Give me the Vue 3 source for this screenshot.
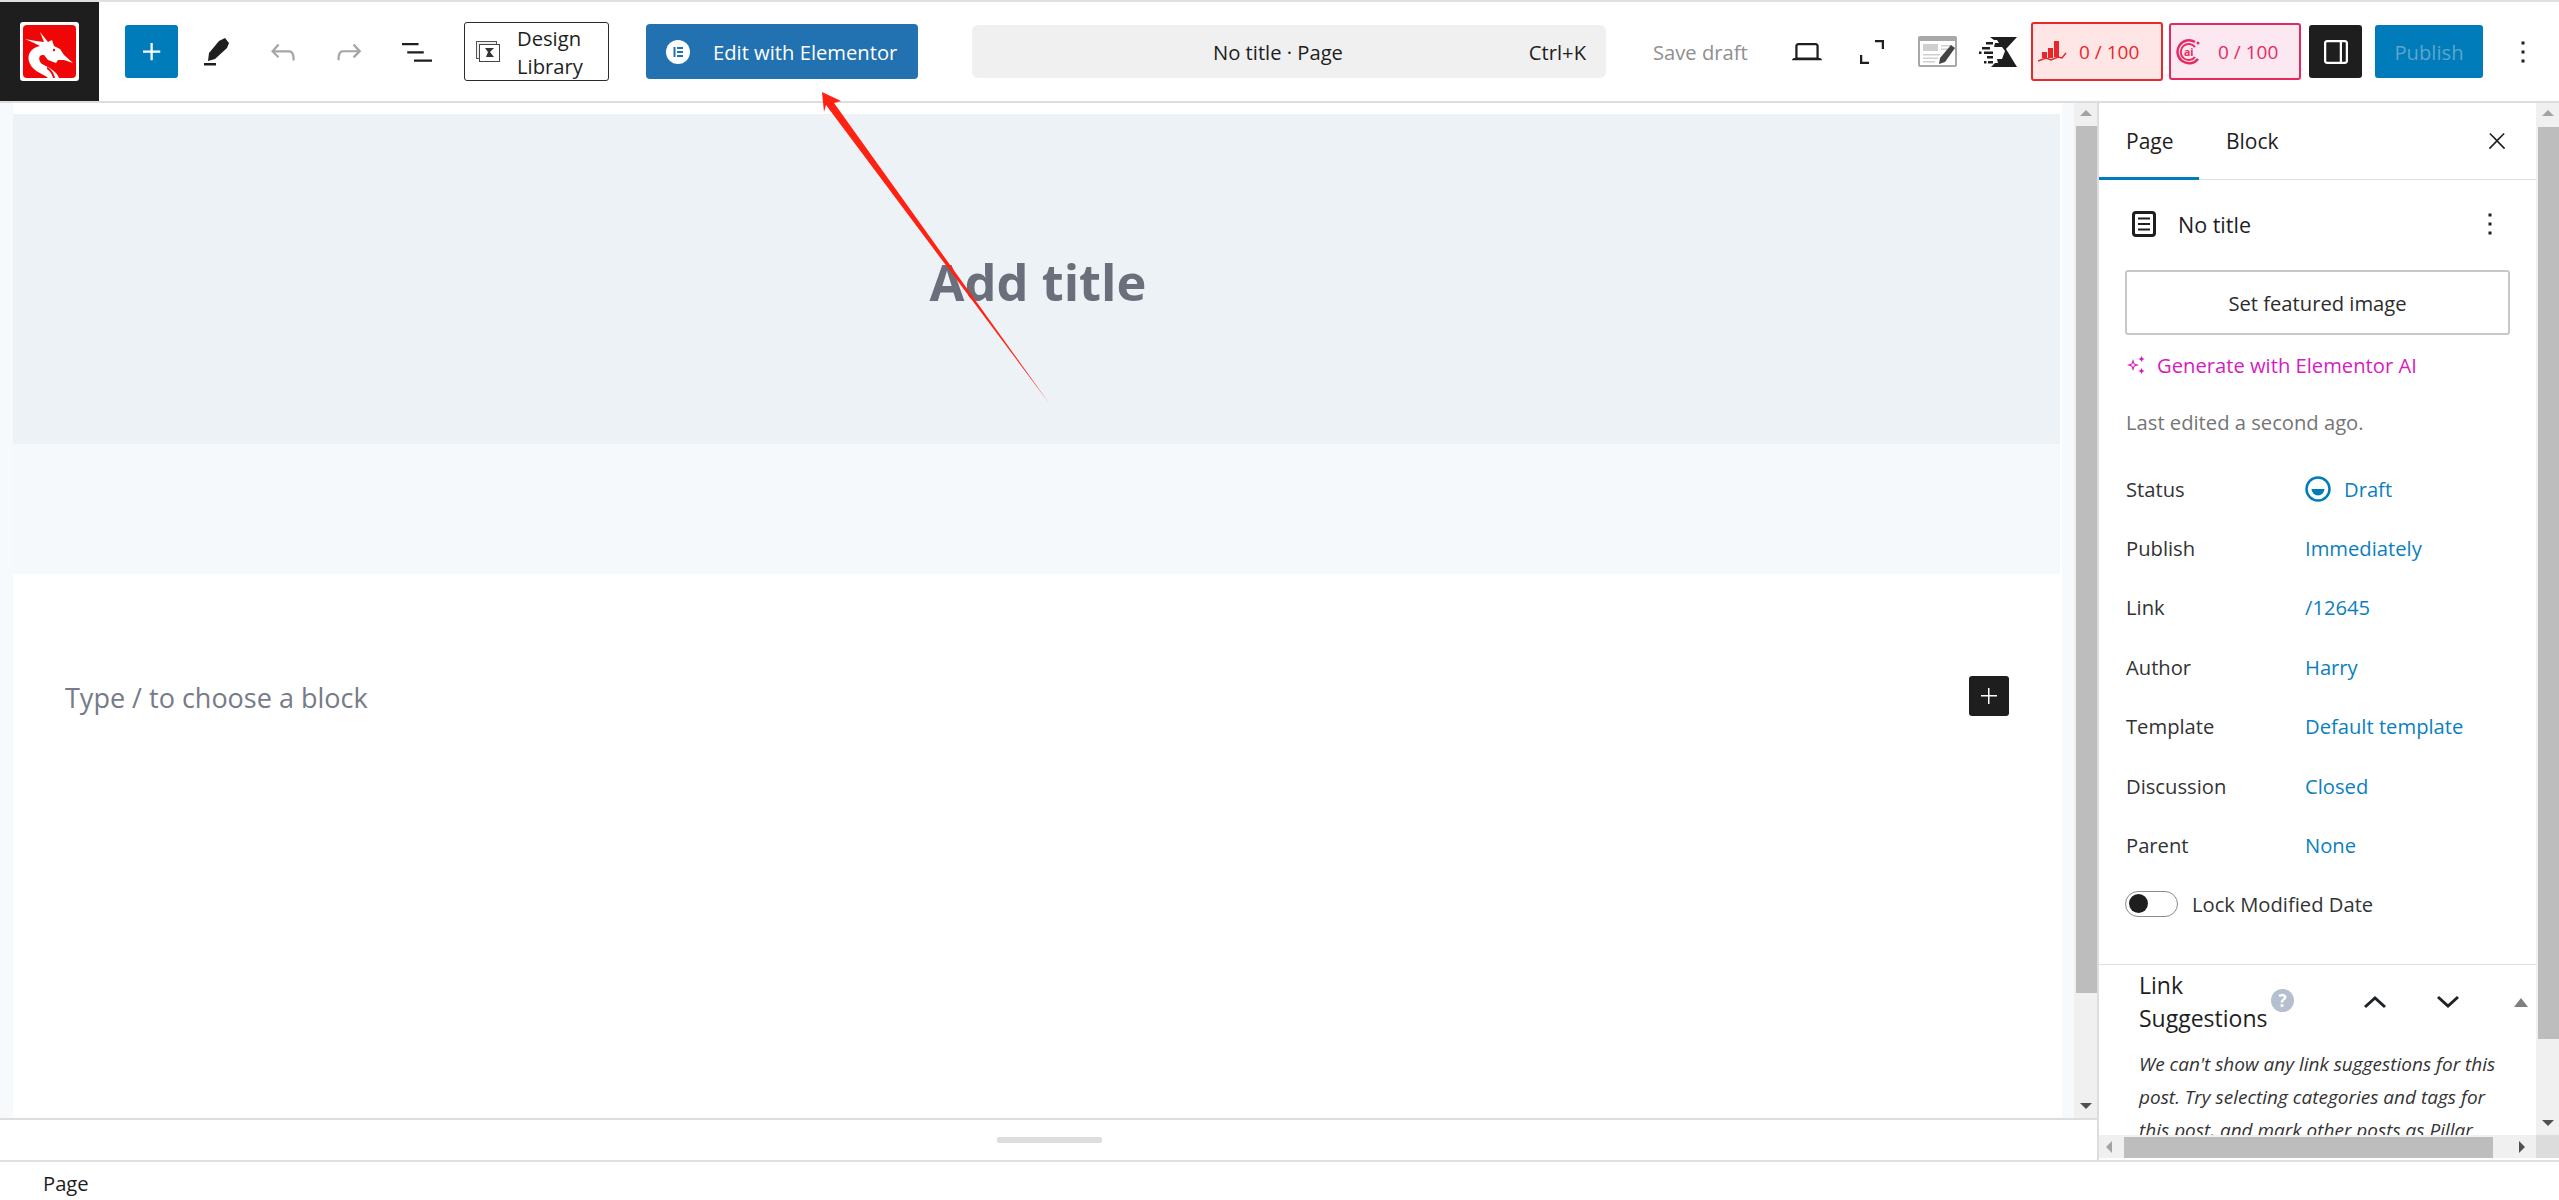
<script setup>
const rows = [
  { label: 'Status', value: 'Draft', status: true },
  { label: 'Publish', value: 'Immediately' },
  { label: 'Link', value: '/12645' },
  { label: 'Author', value: 'Harry' },
  { label: 'Template', value: 'Default template' },
  { label: 'Discussion', value: 'Closed' },
  { label: 'Parent', value: 'None' }
]
</script>

<template>
  <div class="page">
    <div class="top-line"></div>

    <!-- toolbar -->
    <header class="toolbar">
      <div class="logo">
        <svg width="59" height="59" viewBox="0 0 59 59">
          <rect width="59" height="59" rx="3" fill="#fff" />
          <rect x="3" y="3" width="53" height="53" rx="4" fill="#f00606" />
          <path d="M20 10L28 20L32 18L34 24L40 27L44 33L53 41L44 38L38 38L36 41L28 38L24 33C18 32 18 38 22 42C30 46 37 50 39 56L28 56C24 52 14 50 10 42C6 34 10 26 20 24L14 21L5 17L16 19L24 20Z" fill="#fff" />
          <path d="M27 45c4 2 7 6 8 11h-2c-1-4-3-7-6-9z" fill="#f00606" />
          <circle cx="34" cy="28" r="1.200" fill="#f00606" />
        </svg>
      </div>
      <button class="add-btn">
        <svg width="36" height="36" viewBox="0 0 24 24" fill="#fff"><path d="M11 12.5V17.5H12.5V12.5H17.5V11H12.5V6H11V11H6V12.5H11Z" /></svg>
      </button>
      <svg class="pen" width="26" height="28" viewBox="0 0 26 28" fill="#1e1e1e">
        <path d="M15 3l6-3 4 5-2 5-12 11-7 2 1-8z" />
        <rect x="0" y="25" width="12" height="2.5" />
      </svg>
      <svg class="undo" width="36" height="36" viewBox="0 0 24 24" fill="#a6a6a6"><path d="M18.3 11.7c-.6-.6-1.4-.9-2.3-.9H6.7l2.9-3.3-1.1-1-4.5 5L8.5 16l1-1-2.7-2.7H16c.5 0 .9.2 1.3.5 1 1 1 3.4 1 4.5v.3h1.5v-.2c0-1.5 0-4.3-1.5-5.7z" /></svg>
      <svg class="redo" width="36" height="36" viewBox="0 0 24 24" fill="#a6a6a6"><path d="M15.6 6.5l-1.1 1 2.9 3.3H8c-.9 0-1.7.3-2.3.9-1.4 1.5-1.4 4.2-1.4 5.6v.2h1.5v-.3c0-1.1 0-3.5 1-4.5.3-.3.7-.5 1.3-.5h9.2L14.5 15l1.1 1.1 4.6-4.6-4.6-5z" /></svg>
      <svg class="list" width="36" height="36" viewBox="0 0 24 24" fill="#1e1e1e"><path d="M2 6h11v1.5H2V6Zm3.5 5.5h11V13h-11v-1.5ZM22 17H10v1.5h12V17Z" /></svg>
      <button class="library">
        <svg width="24" height="21" viewBox="0 0 24 21">
          <rect x="0.5" y="0.5" width="20" height="17" fill="#eee" stroke="#555" />
          <rect x="3.5" y="3.5" width="20" height="17" fill="#fff" stroke="#444" />
          <path d="M9 7h9l-4 4 4 5H10l2-5z" fill="#333" />
        </svg>
        <span>Design<br />Library</span>
      </button>
      <button class="elementor">
        <span class="el-logo">
          <svg width="24" height="24" viewBox="0 0 24 24">
            <circle cx="12" cy="12" r="12" fill="#fff" />
            <path d="M7.5 7h2v10h-2zM11 7h6v2h-6zM11 11h6v2h-6zM11 15h6v2h-6z" fill="#2271b1" />
          </svg>
        </span>
        Edit with Elementor
      </button>
      <div class="command">
        <span class="command-title">No title · Page</span>
        <span class="command-key">Ctrl+K</span>
      </div>
      <span class="save">Save draft</span>
      <svg class="laptop" width="36" height="36" viewBox="0 0 24 24" fill="#1e1e1e"><path d="M20.5 16h-.7V8c0-1.1-.9-2-2-2H6.2c-1.1 0-2 .9-2 2v8h-.7c-.8 0-1.5.7-1.5 1.5h20c0-.8-.7-1.5-1.5-1.5zM5.7 8c0-.3.2-.5.5-.5h11.6c.3 0 .5.2.5.5v7.6H5.7V8z" /></svg>
      <svg class="expand" width="36" height="36" viewBox="0 0 24 24" fill="#1e1e1e"><path d="M4 14h1.500v4.500H10V20H4zM14 4h6v6h-1.500V5.500H14z" /></svg>
      <svg class="note" width="39" height="31" viewBox="0 0 39 31">
        <rect x="1" y="1" width="37" height="29" rx="1" fill="#fff" stroke="#a8a8a8" stroke-width="2" />
        <rect x="1" y="1" width="37" height="4" fill="#a8a8a8" />
        <rect x="5" y="8" width="15" height="7" fill="#cfcfcf" />
        <path d="M5 18h17v1.500H5zM5 21.500h15V23H5zM5 25h12v1.500H5zM23 9h11v1.500H23zM23 12.500h7V14h-7z" fill="#cfcfcf" />
        <path d="M33 9l4 3-10 14-6 2 1-6z" fill="#444" />
      </svg>
      <svg class="bolt" width="38" height="30" viewBox="0 0 38 30" fill="#1e1e1e">
        <path d="M11 0h27l-11 12 11 18H12l4-4h3l-1-4h5l3-8-3-4h-8l1-4h4l-2-3h-3zM7 5h7v2.500H7zM3 10h8v2.500H3zM0 14.500h2.500V17H0zM5 14.500h9V17H5zM8 19h6v2.500H8zM5 24h2.500v2.500H5zM9 24h5v2.500H9z" />
      </svg>
      <div class="score score-red">
        <svg width="29" height="24" viewBox="0 0 29 24" fill="#e8272a">
          <path d="M4 12h5v6H4zM10 8h5v10h-5zM16 1h5v16h-5z" />
          <path d="M0 21l8-3 5 2 7-3 4 1 4-5" fill="none" stroke="#e8272a" stroke-width="1.500" />
        </svg>
        <span>0 / 100</span>
      </div>
      <div class="score score-pink">
        <svg width="26" height="28" viewBox="0 0 26 28" fill="none" stroke="#e52b62">
          <path d="M22 21a11.500 11.500 0 1 1-3-17" stroke-width="2.500" />
          <path d="M19 19a8 8 0 1 1 0-10" stroke-width="2" />
          <text x="8" y="18" font-size="10.500" fill="#e52b62" stroke="none" font-family="Open Sans, sans-serif" font-weight="700">ai</text>
          <circle cx="22" cy="5" r="1.500" fill="#e52b62" stroke="none" />
        </svg>
        <span>0 / 100</span>
      </div>
      <button class="side-btn">
        <svg width="36" height="36" viewBox="0 0 24 24" fill="#fff"><path d="M18 4H6c-1.100 0-2 .9-2 2v12c0 1.100.9 2 2 2h12c1.100 0 2-.9 2-2V6c0-1.100-.9-2-2-2zM5.500 18V6c0-.3.2-.5.500-.5h8.500v13H6c-.3 0-.5-.2-.5-.5zm13 0c0 .3-.2.5-.5.500h-2v-13h2c.3 0 .5.2.5.5v12z" /></svg>
      </button>
      <button class="publish">Publish</button>
      <svg class="more" width="36" height="36" viewBox="0 0 24 24" fill="#1e1e1e"><path d="M13 19h-2v-2h2v2zm0-6h-2v-2h2v2zm0-6h-2V5h2v2z" /></svg>
    </header>

    <div class="main">
      <div class="left">
        <div class="editor">
          <div class="canvas">
            <div class="title-block"><h1>Add title</h1></div>
            <div class="band"></div>
            <div class="content">
              <span class="placeholder">Type / to choose a block</span>
              <button class="inline-add">
                <svg width="24" height="24" viewBox="0 0 24 24" fill="#fff"><path d="M11 12.500V20H12.500V12.500H20V11H12.500V4H11V11H4V12.500H11Z" /></svg>
              </button>
            </div>
          </div>
          <div class="gutter"></div>
          <div class="vbar">
            <span class="arrow up"></span>
            <div class="thumb left-thumb"></div>
            <span class="arrow down"></span>
          </div>
        </div>
        <div class="resize"><span class="grip"></span></div>
      </div>

      <!-- settings sidebar -->
      <aside class="sidebar">
        <div class="side-top">
          <div class="panel">
            <div class="tabs">
              <span class="tab active">Page</span>
              <span class="tab">Block</span>
              <svg class="close" width="26" height="26" viewBox="0 0 24 24" fill="#1e1e1e"><path d="M13 11.800l6.100-6.300-1-1-6.100 6.200-6.100-6.200-1 1 6.100 6.300-6.500 6.700 1 1 6.500-6.600 6.500 6.600 1-1z" /></svg>
            </div>
            <div class="doc-row">
              <svg width="36" height="36" viewBox="0 0 36 36" fill="none" stroke="#1e1e1e">
                <rect x="7.500" y="6.500" width="21" height="23" rx="2.500" stroke-width="3" />
                <path d="M12 12.500h12M12 18h12M12 23.500h12" stroke-width="2.200" />
              </svg>
              <span class="doc-title">No title</span>
              <svg class="doc-more" width="36" height="36" viewBox="0 0 24 24" fill="#1e1e1e"><path d="M13 19h-2v-2h2v2zm0-6h-2v-2h2v2zm0-6h-2V5h2v2z" /></svg>
            </div>
            <button class="featured">Set featured image</button>
            <div class="generate">
              <svg width="20" height="20" viewBox="0 0 20 20" fill="#d41cc0">
                <path d="M7 4l1.500 4.500L13 10l-4.500 1.500L7 16l-1.500-4.500L1 10l4.500-1.500zM7 7.500L6.300 9.300 4.500 10l1.800.7.700 1.800.7-1.800 1.800-.7-1.800-.7z" fill-rule="evenodd" />
                <path d="M15.500 1l1 2 2 1-2 1-1 2-1-2-2-1 2-1zM15.500 13l1 2 2 1-2 1-1 2-1-2-2-1 2-1z" />
              </svg>
              <span>Generate with Elementor AI</span>
            </div>
            <p class="edited">Last edited a second ago.</p>
            <div v-for="row in rows" :key="row.label" class="row">
              <span class="row-label">{{ row.label }}</span>
              <span class="row-value">
                <svg v-if="row.status" class="draft-icon" width="26" height="26" viewBox="0 0 26 26">
                  <circle cx="13" cy="13" r="11.500" fill="none" stroke="#007cba" stroke-width="2.500" />
                  <path d="M6.500 13h13a6.500 6.500 0 0 1-13 0z" fill="#007cba" />
                </svg>
                {{ row.value }}
              </span>
            </div>
            <div class="lock">
              <span class="switch"><i></i></span>
              <span>Lock Modified Date</span>
            </div>
            <div class="suggest">
              <div class="suggest-head">
                <h2>Link<br />Suggestions</h2>
                <span class="help">?</span>
                <svg class="chev-up" width="22" height="14" viewBox="0 0 22 14" fill="none" stroke="#1e2327" stroke-width="3"><path d="M1 12l10-9 10 9" /></svg>
                <svg class="chev-down" width="22" height="14" viewBox="0 0 22 14" fill="none" stroke="#1e2327" stroke-width="3"><path d="M1 2l10 9 10-9" /></svg>
                <span class="tri"></span>
              </div>
              <p class="suggest-text">We can't show any link suggestions for this post. Try selecting categories and tags for this post, and mark other posts as Pillar Content to make them show up here.</p>
            </div>
          </div>
          <div class="vbar side-vbar">
            <span class="arrow up"></span>
            <div class="thumb right-thumb"></div>
            <span class="arrow down"></span>
          </div>
        </div>
        <div class="hbar">
          <span class="arrow to-left"></span>
          <div class="hthumb"></div>
          <span class="arrow to-right"></span>
          <span class="corner"></span>
        </div>
      </aside>
    </div>

    <footer class="footer">Page</footer>

    <!-- red annotation arrow over the screenshot -->
    <svg class="annotation" width="240" height="320" viewBox="815 88 240 320">
      <polygon points="822,92 841,101 834,103 1049,403 826,105 824,112" fill="#ff2212" />
    </svg>
  </div>
</template>

<style>
html, body {
  margin: 0;
  background: #fff;
}
</style>

<style scoped>
.page {
  position: relative;
  width: 2559px;
  height: 1200px;
  overflow: hidden;
  display: flex;
  flex-direction: column;
  font-family: "Open Sans", "Noto Sans", sans-serif;
  font-size: 20.2px;
  color: #1e1e1e;
  background: #fff;
}

button {
  font-family: inherit;
  padding: 0;
  border: none;
  cursor: pointer;
}

.top-line {
  height: 2px;
  background: #e0e0e0;
  flex: none;
}

.toolbar {
  flex: none;
  height: 99px;
  border-bottom: 2px solid #ddd;
  display: flex;
  align-items: center;
  background: #fff;
}

.toolbar > svg {
  flex: none;
}

.logo {
  width: 99px;
  height: 99px;
  flex: none;
  background: #1e1e1e;
  display: flex;
  align-items: center;
  justify-content: center;
}

.add-btn {
  width: 53px;
  height: 53px;
  margin-left: 26px;
  background: #007cba;
  border-radius: 3px;
  display: flex;
  align-items: center;
  justify-content: center;
}

.pen {
  margin-left: 26px;
}

.undo {
  margin-left: 35px;
}

.redo {
  margin-left: 30px;
}

.list {
  margin-left: 32px;
}

.library {
  width: 145px;
  height: 59px;
  margin-left: 29px;
  box-sizing: border-box;
  border: 1.5px solid #2b2b2b;
  border-radius: 3px;
  background: #fff;
  color: #1e1e1e;
  display: flex;
  align-items: center;
  padding-left: 11px;
  gap: 17px;
  font-size: 20.2px;
  line-height: 28px;
  text-align: left;
}

.elementor {
  width: 272px;
  height: 55px;
  margin-left: 37px;
  background: #2271b1;
  color: #fff;
  border-radius: 4px;
  display: flex;
  align-items: center;
  font-size: 20.2px;
}

.el-logo {
  display: flex;
  margin: 0 23px 0 20px;
}

.command {
  width: 634px;
  height: 53px;
  margin-left: 54px;
  background: #f0f0f0;
  border-radius: 6px;
  display: flex;
  align-items: center;
  position: relative;
  font-size: 20.2px;
}

.command-title {
  margin-left: 241px;
}

.command-key {
  margin-left: auto;
  margin-right: 20px;
}

.save {
  margin-left: 47px;
  color: #8f8f8f;
  width: 94px;
  white-space: nowrap;
}

.laptop {
  margin-left: 42px;
}

.expand {
  margin-left: 29px;
}

.note {
  margin-left: 28px;
}

.bolt {
  margin-left: 22px;
}

.score {
  box-sizing: border-box;
  width: 132px;
  display: flex;
  align-items: center;
  border-radius: 3px;
  font-size: 19px;
  flex: none;
}

.score-red {
  height: 59px;
  margin-left: 14px;
  background: #fde6e5;
  border: 2px solid #e9282b;
  color: #e8272a;
  padding-left: 5px;
  gap: 12px;
}

.score-pink {
  height: 57px;
  margin-left: 6px;
  background: #fbe8f0;
  border: 2px solid #e3295f;
  color: #e52b62;
  padding-left: 5px;
  gap: 16px;
}

.side-btn {
  width: 53px;
  height: 53px;
  margin-left: 8px;
  background: #1e1e1e;
  border-radius: 3px;
  display: flex;
  align-items: center;
  justify-content: center;
}

.publish {
  width: 108px;
  height: 53px;
  margin-left: 13px;
  background: #007cba;
  color: #5da5cd;
  border-radius: 3px;
  font-size: 20.2px;
}

.more {
  margin-left: 22px;
}

.main {
  flex: 1;
  min-height: 0;
  display: flex;
}

.left {
  width: 2097px;
  flex: none;
  display: flex;
  flex-direction: column;
}

.editor {
  height: 1015px;
  flex: none;
  display: flex;
  background: #f6fafd;
  border-bottom: 2px solid #ddd;
}

.canvas {
  width: 2049px;
  margin-left: 13px;
  flex: none;
  padding-top: 11px;
  background: #fff;
  box-sizing: border-box;
  display: flex;
  flex-direction: column;
}

.title-block {
  height: 330px;
  flex: none;
  background: #edf2f6;
  margin-right: 2px;
  display: flex;
  align-items: center;
  justify-content: center;
}

.title-block h1 {
  margin: 5px 0 0 3px;
  font-size: 50.6px;
  font-weight: 700;
  color: #6b6f7b;
}

.band {
  height: 130px;
  flex: none;
  background: #f5f9fc;
  margin-right: 2px;
}

.content {
  height: 245px;
  display: flex;
  align-items: center;
  justify-content: space-between;
  padding: 0 53px 0 52px;
}

.placeholder {
  font-size: 27px;
  color: #757b87;
  margin-top: 2px;
}

.inline-add {
  width: 40px;
  height: 40px;
  margin-top: -2px;
  background: #1e1e1e;
  border-radius: 3px;
  display: flex;
  align-items: center;
  justify-content: center;
}

.gutter {
  width: 12px;
  flex: none;
}

.vbar {
  width: 23px;
  flex: none;
  background: #f0f0f0;
  display: flex;
  flex-direction: column;
  align-items: flex-end;
  position: relative;
}

.thumb {
  width: 21px;
  margin-top: 23px;
  background: #bdbdbd;
}

.left-thumb {
  height: 867px;
}

.right-thumb {
  height: 912px;
  margin-top: 24px;
}

.arrow {
  position: absolute;
  width: 0;
  height: 0;
}

.arrow.up {
  top: 7px;
  right: 5px;
  border-left: 6px solid transparent;
  border-right: 6px solid transparent;
  border-bottom: 6px solid #a3a3a3;
}

.arrow.down {
  bottom: 9px;
  right: 5px;
  border-left: 6px solid transparent;
  border-right: 6px solid transparent;
  border-top: 6px solid #505050;
}

.resize {
  flex: 1;
  display: flex;
  align-items: center;
  justify-content: center;
  padding-left: 2px;
}

.grip {
  width: 105px;
  height: 6px;
  background: #ddd;
  border-radius: 2px;
}

.sidebar {
  width: 462px;
  flex: none;
  box-sizing: border-box;
  border-left: 2px solid #ddd;
  display: flex;
  flex-direction: column;
  padding-bottom: 2px;
}

.side-top {
  height: 1032px;
  flex: none;
  display: flex;
}

.panel {
  width: 437px;
  flex: none;
  overflow: hidden;
}

.tabs {
  height: 77px;
  box-sizing: border-box;
  border-bottom: 1px solid #ddd;
  display: flex;
  align-items: center;
  position: relative;
  font-size: 21px;
}

.tab {
  width: 100px;
  height: 77px;
  line-height: 76px;
  box-sizing: border-box;
  padding-left: 27px;
  font-weight: 500;
}

.tab.active {
  border-bottom: 3px solid #007cba;
}

.close {
  margin-left: auto;
  margin-right: 26px;
}

.doc-row {
  height: 90px;
  box-sizing: border-box;
  padding: 0 28px 2px 27px;
  display: flex;
  align-items: center;
}

.doc-title {
  margin-left: 16px;
  font-size: 21.5px;
  font-weight: 500;
}

.doc-more {
  margin-left: auto;
}

.featured {
  display: block;
  width: 385px;
  height: 65px;
  margin-left: 26px;
  box-sizing: border-box;
  background: #fff;
  border: 2px solid #c8c8c8;
  border-radius: 3px;
  font-size: 20.2px;
  color: #2c2c2c;
}

.generate {
  height: 62px;
  box-sizing: border-box;
  padding-bottom: 2px;
  margin-left: 27px;
  display: flex;
  align-items: center;
  gap: 11px;
  color: #d41cc0;
}

.edited {
  margin: 0;
  height: 62px;
  line-height: 50px;
  padding-left: 27px;
  color: #757575;
}

.row {
  height: 59.4px;
  display: flex;
  align-items: center;
  padding-left: 27px;
  color: #333;
}

.row-label {
  width: 179px;
  flex: none;
}

.row-value {
  display: flex;
  align-items: center;
  color: #0b7fbd;
}

.draft-icon {
  margin-right: 13px;
}

.lock {
  height: 58px;
  margin-left: 26px;
  display: flex;
  align-items: center;
  gap: 14px;
  color: #333;
}

.switch {
  width: 53px;
  height: 26px;
  box-sizing: border-box;
  border: 1px solid #8c8c8c;
  border-radius: 13px;
  display: flex;
  align-items: center;
  padding-left: 3px;
}

.switch i {
  width: 19px;
  height: 19px;
  border-radius: 50%;
  background: #1e1e1e;
}

.suggest {
  margin-top: 31px;
  border-top: 1px solid #ddd;
  padding-left: 40px;
}

.suggest-head {
  height: 75px;
  display: flex;
  align-items: center;
  position: relative;
}

.suggest-head h2 {
  margin: -1px 0 0;
  width: 133px;
  font-size: 23px;
  line-height: 33px;
  font-weight: 500;
  flex: none;
  white-space: nowrap;
}

.help {
  width: 23px;
  height: 23px;
  margin-left: -1px;
  border-radius: 50%;
  background: #b4c0cf;
  color: #fff;
  font-size: 17px;
  font-weight: 700;
  line-height: 23px;
  text-align: center;
  flex: none;
  margin-top: -4px;
}

.chev-up {
  margin-left: 70px;
  flex: none;
}

.chev-down {
  margin-left: 51px;
  flex: none;
}

.tri {
  margin-left: 55px;
  width: 0;
  height: 0;
  border-left: 7px solid transparent;
  border-right: 7px solid transparent;
  border-bottom: 9px solid #7f7f7f;
}

.suggest-text {
  margin: 0;
  width: 370px;
  padding-top: 8px;
  font-style: italic;
  font-size: 19px;
  line-height: 33px;
  color: #333;
}

.hbar {
  flex: 1;
  display: flex;
  align-items: flex-end;
  background: #f0f0f0;
  position: relative;
}

.hthumb {
  width: 369px;
  height: 21px;
  margin-left: 25px;
  background: #bdbdbd;
}

.arrow.to-left {
  left: 7px;
  top: 6px;
  border-top: 6px solid transparent;
  border-bottom: 6px solid transparent;
  border-right: 6px solid #a3a3a3;
}

.arrow.to-right {
  left: 420px;
  top: 6px;
  border-top: 6px solid transparent;
  border-bottom: 6px solid transparent;
  border-left: 6px solid #505050;
}

.corner {
  position: absolute;
  right: 0;
  top: 0;
  bottom: 0;
  width: 23px;
  background: #dcdcdc;
}

.footer {
  flex: none;
  height: 40px;
  box-sizing: border-box;
  border-top: 2px solid #e0e0e0;
  padding-left: 43px;
  line-height: 42px;
}

.annotation {
  position: absolute;
  left: 815px;
  top: 88px;
}
</style>
